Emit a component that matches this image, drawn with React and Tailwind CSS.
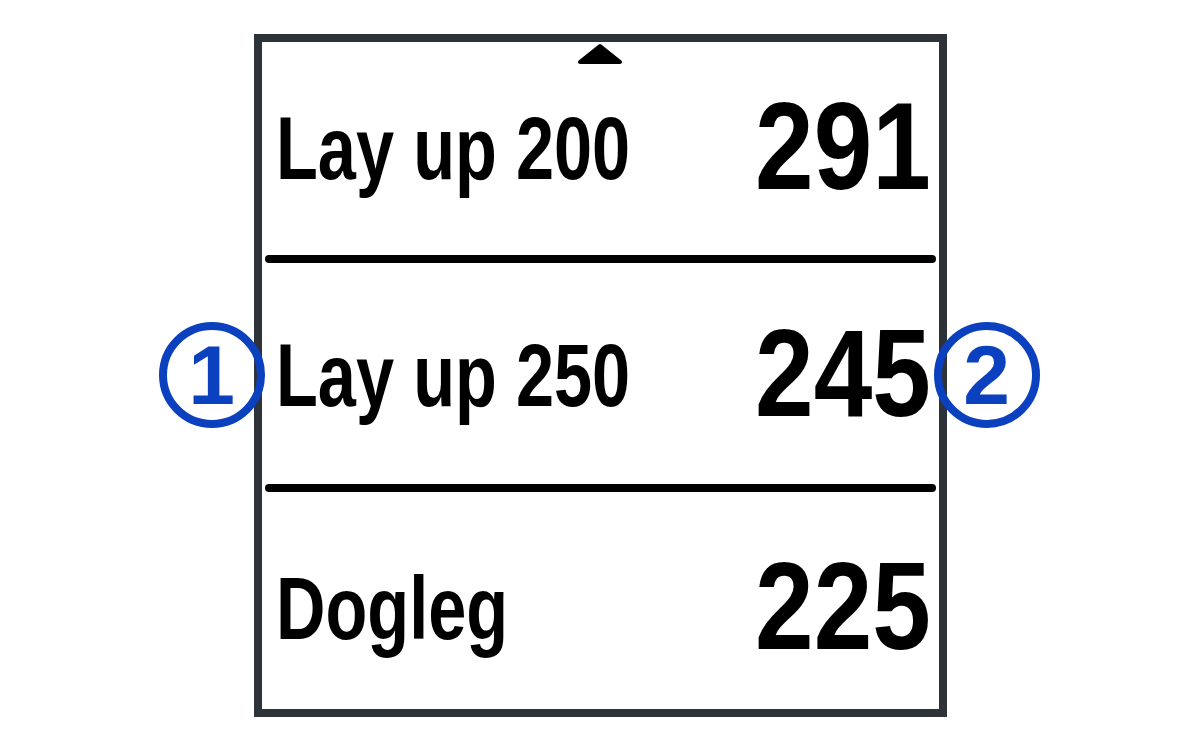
import React from "react";

const rows = [
  { label: "Lay up 200", value: "291", h: "h-[213px]", pad: "pt-0" },
  { label: "Lay up 250", value: "245", h: "h-[221px]", pad: "pt-[4px]" },
  { label: "Dogleg", value: "225", h: "h-[217px]", pad: "pt-[16px]" },
];

function Row({ label, value, h, pad }) {
  return (
    <div className={`${h} ${pad} flex items-center pl-[14px] pr-[8px]`}>
      <div className="w-0 flex-1">
        <span className="inline-block origin-left scale-x-[0.77] whitespace-nowrap text-[89px] font-bold leading-none text-black">
          {label}
        </span>
      </div>
      <span className="inline-block shrink-0 origin-right scale-x-[0.85] pb-[5px] whitespace-nowrap text-[124px] font-bold leading-none text-black">
        {value}
      </span>
    </div>
  );
}

function Callout({ n, className }) {
  return (
    <div
      className={`absolute flex h-[106px] w-[106px] items-center justify-center rounded-full border-[8px] border-[#0b40bf] ${className}`}
    >
      <span className="text-[84px] font-bold leading-none text-[#0b40bf]">{n}</span>
    </div>
  );
}

export default function App() {
  return (
    <div
      className="flex h-[750px] w-[1200px] items-center justify-center bg-white"
      style={{ fontFamily: '"Liberation Sans", Arial, sans-serif' }}
    >
      <div className="relative h-[683px] w-[693px] border-[8px] border-[#2d3338] bg-white">
        {/* scroll-up indicator */}
        <svg
          className="absolute left-1/2 top-[1px] -translate-x-1/2"
          width="46"
          height="22"
          viewBox="0 0 46 22"
        >
          <polygon
            points="23,3 43,19 3,19"
            fill="#000"
            stroke="#000"
            strokeWidth="4"
            strokeLinejoin="round"
          />
        </svg>

        <div className="flex h-full flex-col">
          <Row {...rows[0]} />
          <div className="mx-[3px] h-[8px] rounded-full bg-black" />
          <Row {...rows[1]} />
          <div className="mx-[3px] h-[8px] rounded-full bg-black" />
          <Row {...rows[2]} />
        </div>

        <Callout n="1" className="left-[-103px] top-[280px]" />
        <Callout n="2" className="left-[672px] top-[280px]" />
      </div>
    </div>
  );
}
